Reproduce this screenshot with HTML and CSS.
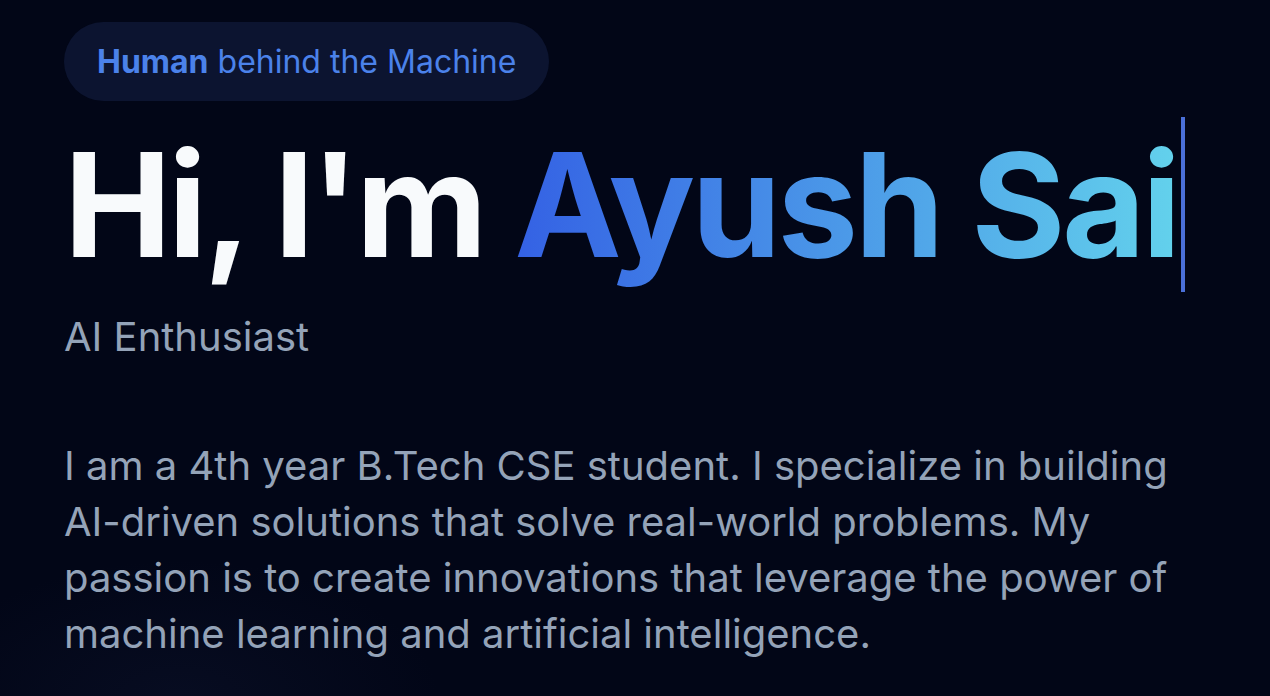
FILE: index.html
```html
<!DOCTYPE html>
<html lang="en">
<head>
<meta charset="utf-8">
<title>Ayush Sai</title>
<link rel="stylesheet" href="styles.css">
</head>
<body>
<main class="hero">
  <div class="badge"><strong>Human</strong> behind the Machine</div>
  <h1 class="title">Hi, I'm <span class="name">Ayush Sai</span></h1>
  <p class="role">AI Enthusiast</p>
  <p class="bio">I am a 4th year B.Tech CSE student. I specialize in building AI-driven solutions that solve real-world problems. My passion is to create innovations that leverage the power of machine learning and artificial intelligence.</p>
</main>
</body>
</html>
```
FILE: styles.css
```css
html, body {
  margin: 0;
  padding: 0;
  height: 100%;
}
body {
  background-color: #020617;
  background-image: radial-gradient(ellipse 260px 140px at 180px 700px, rgba(30, 41, 80, 0.18), rgba(2, 6, 23, 0));
  font-family: Inter, "Noto Sans", sans-serif;
  overflow: hidden;
}
.hero {
  display: flex;
  flex-direction: column;
  align-items: flex-start;
  padding: 22px 0 0 64px;
}
.badge {
  height: 79px;
  line-height: 79px;
  padding: 0 33px;
  border-radius: 40px;
  background: #0c1430;
  color: #4b82ea;
  font-size: 32px;
  white-space: nowrap;
}
.badge strong {
  font-weight: 700;
}
.title {
  margin: 32px 0 0;
  font-size: 144px;
  line-height: 144px;
  font-weight: 700;
  letter-spacing: -0.025em;
  color: #f8fafc;
  white-space: nowrap;
}
.name {
  background: linear-gradient(90deg, #3461e4 0%, #63d2ec 100%);
  -webkit-background-clip: text;
  background-clip: text;
  -webkit-text-fill-color: transparent;
  color: transparent;
  padding-right: 4px;
  border-right: 4px solid #4a6fd8;
}
.role {
  margin: 30px 0 0;
  font-size: 40px;
  line-height: 60px;
  color: #94a3b8;
}
.bio {
  margin: 71px 0 0;
  max-width: 1140px;
  font-size: 40px;
  line-height: 56px;
  color: #94a3b8;
}
```
